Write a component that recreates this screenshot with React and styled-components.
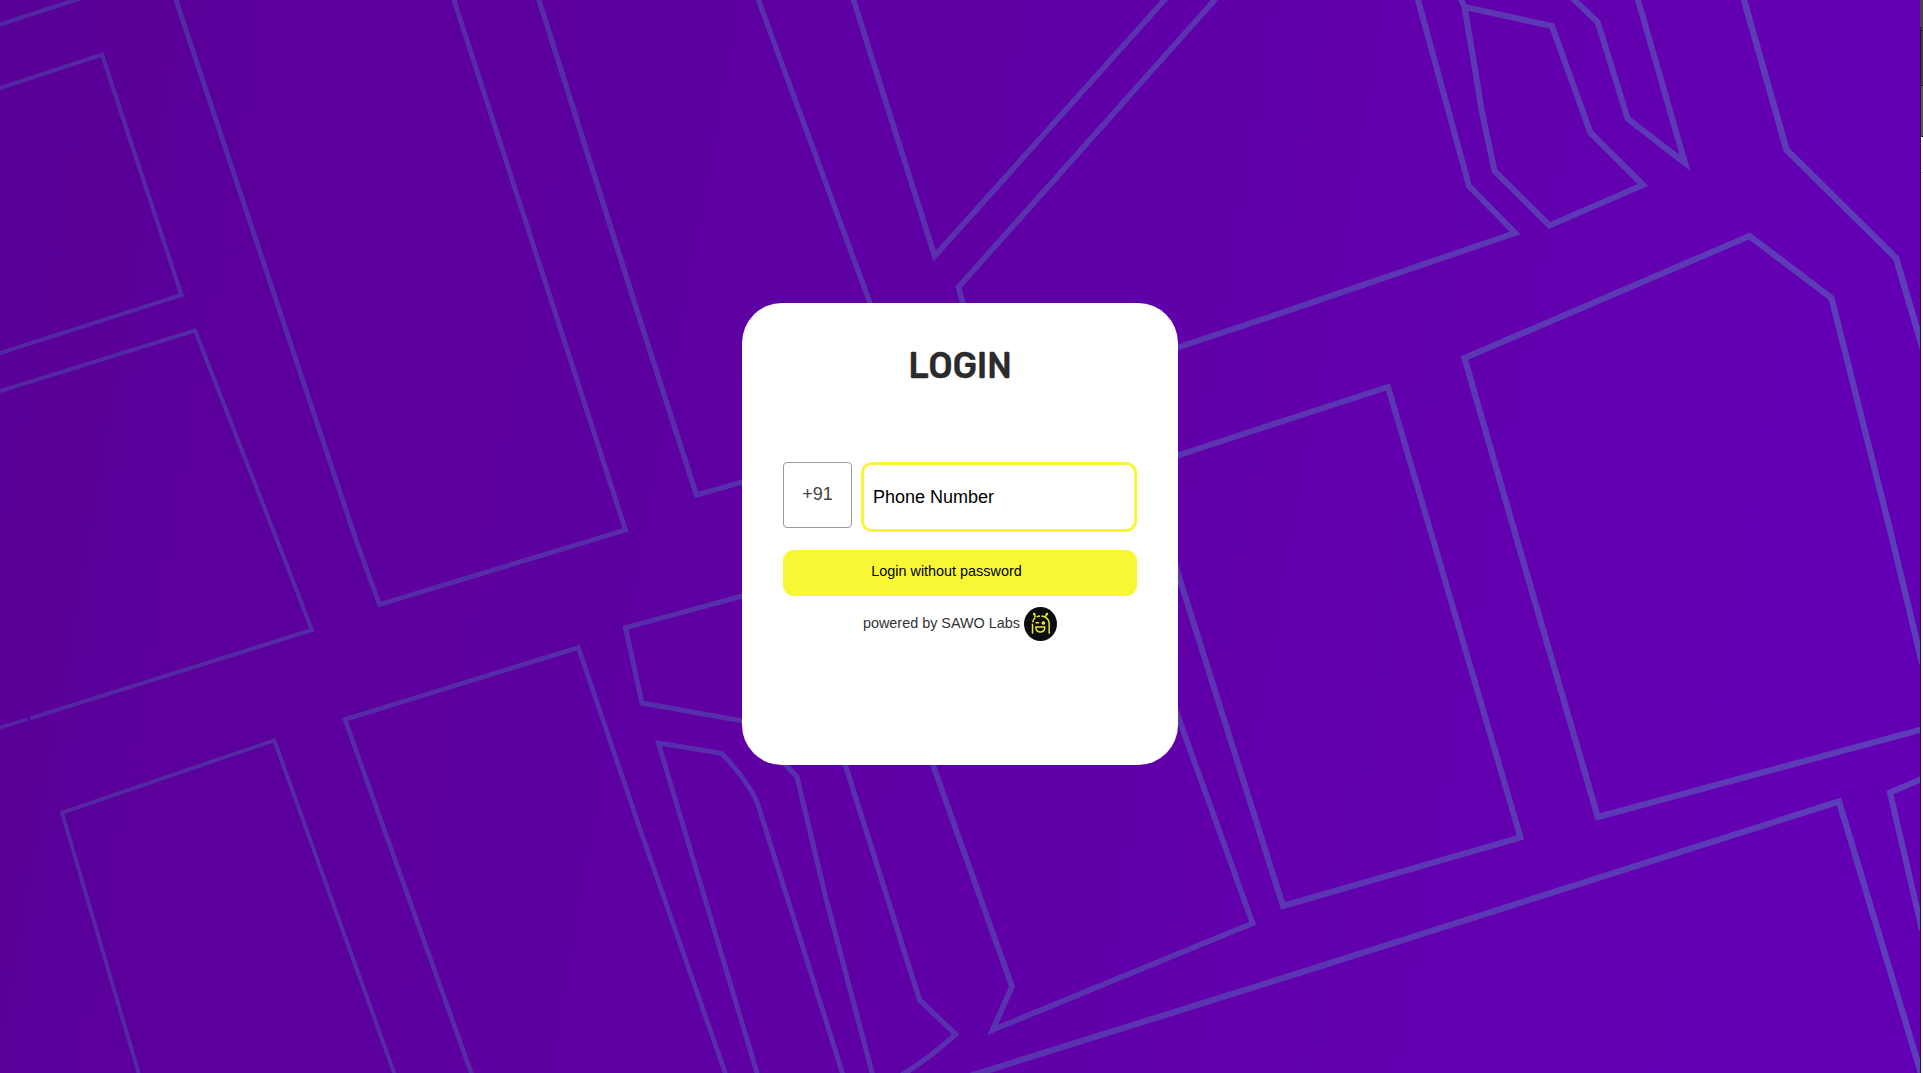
import React from "react";
import styled, { createGlobalStyle } from "styled-components";

const GlobalStyle = createGlobalStyle`
  * { box-sizing: border-box; }
  body { margin: 0; overflow: hidden; }
`;

const Page = styled.div`
  display: flex;
  width: 100vw;
  height: 100vh;
  font-family: "Liberation Sans", Arial, sans-serif;
`;

const Main = styled.main`
  position: relative;
  flex: 1;
  display: flex;
  justify-content: center;
  align-items: flex-start;
  padding-top: 303px;
  overflow: hidden;
  background: linear-gradient(100deg, #590097 0%, #5f00a5 48%, #6400b4 90%);
`;

const MapArt = styled.svg`
  position: absolute;
  inset: 0;
  width: 1920px;
  height: 1073px;
`;

const Card = styled.section`
  position: relative;
  display: flex;
  flex-direction: column;
  width: 436px;
  height: 462px;
  padding: 0 41px;
  border-radius: 40px;
  background: #fff;
`;

const Title = styled.h1`
  margin: 38px 0 0;
  height: 48px;
  line-height: 48px;
  text-align: center;
  font-family: Rubik, Roboto, sans-serif;
  font-size: 37.5px;
  font-weight: 500;
  letter-spacing: -0.3px;
  transform: scaleX(0.94);
  color: #2b2b2b;
  -webkit-text-stroke: 0.3px #2b2b2b;
`;

const PhoneRow = styled.div`
  display: flex;
  align-items: flex-start;
  gap: 9px;
  margin-top: 73px;
`;

const CountryCode = styled.div`
  width: 69px;
  height: 66px;
  border: 1px solid #9b9b9b;
  border-radius: 4px;
  line-height: 63px;
  text-align: center;
  font-size: 18px;
  color: #444;
`;

const PhoneField = styled.input`
  flex: 1;
  min-width: 0;
  height: 70px;
  padding: 0 0 0 9px;
  border: 3px solid #f8f736;
  border-radius: 11px;
  outline: none;
  background: #fff;
  font-family: inherit;
  font-size: 18px;
  color: #000;
  &::placeholder { color: #000; opacity: 1; }
`;

const LoginButton = styled.button`
  height: 46px;
  margin-top: 18px;
  padding: 0 27px 4px 0;
  border: 0;
  border-radius: 11px;
  background: #f8f736;
  font-family: inherit;
  font-size: 14.4px;
  text-align: center;
  color: #000;
`;

const PoweredBy = styled.footer`
  display: flex;
  justify-content: center;
  align-items: center;
  gap: 4px;
  margin-top: 11px;
  font-size: 14.4px;
  color: #333;
`;

const PoweredText = styled.span`
  padding-bottom: 2px;
  line-height: 18px;
`;

const Logo = styled.svg`
  display: block;
  width: 33px;
  height: 34px;
`;

const EdgeStrip = styled.aside`
  display: flex;
  flex-direction: column;
  width: 3px;
  background: #f6f6f6;
`;

const EdgeBlock = styled.div`
  height: ${(p) => p.$height}px;
  flex: ${(p) => (p.$fill ? 1 : "none")};
  background: ${(p) => p.$color};
  border-left: ${(p) => (p.$bare ? "none" : "1px solid #1e1e22")};
`;

const roads = [
  { w: 4.2, d: "M-5 26L0 24.5L78 -1L85 -4" },
  { w: 4, d: "M-5 90L0 88L102 54.5L181.5 295L0 353L-5 355" },
  { w: 4, d: "M-5 393L0 391L195 330.5L277 540L312 630L30 718.4" },
  { w: 3.2, d: "M27.5 719.2L-5 729" },
  { w: 4.8, d: "M175 -4L176 0L356 540L379.5 604.5L625.5 530L454 0L453 -4" },
  { w: 5.2, d: "M538 -4L539 0L640 320L696.5 495L742 482L932 420L870 303L758.4 0L757 -4" },
  { w: 5.6, d: "M852 -4L853.5 0L934.7 256L1164.5 0L1170 -6" },
  { w: 5.6, d: "M1220 -6L1214.7 0L958.6 287L963 304L967 320" },
  { w: 6, d: "M1417 -4L1418 0L1469 186L1515 233L1280 313.4L1170 350" },
  { w: 6, d: "M1458.5 -6L1464.5 7L1552 26L1590.4 132.6L1643 185L1549.4 225.5L1494.5 171L1481.5 110L1475 69L1464.5 7" },
  { w: 6, d: "M1571 -4L1574.4 0L1597.8 22.4L1627.7 118.8L1685 163L1638 0L1637 -4" },
  { w: 6.4, d: "M1743 -4L1744 0L1786.5 149.8L1896 258L1925 356" },
  { w: 6.2, d: "M1517 540L1464.5 358L1749.5 236L1831.5 298L1891.5 536L1922 663M1464.5 358L1517 540L1597.8 817L1925 728.5" },
  { w: 6, d: "M1170 458L1280 422L1388 387L1432 536L1520.5 837.5L1283 906L1180 580L1165 530" },
  { w: 5.6, d: "M1165 680L1179 719L1252.6 923.3L992.5 1030L1012 986.7L933 765L925 740" },
  { w: 6.2, d: "M970 1076L1280 979L1839 801.5L1923 1080" },
  { w: 6, d: "M1925 777.5L1890 792.5L1922 930" },
  { w: 3.8, d: "M140 1078L62 812.6L274.3 740.3L396 1078" },
  { w: 4.6, d: "M473 1078L345 719.6L578.4 647.5L640 829L727 1078" },
  { w: 5, d: "M750 594L625.5 627.7L642 703L742 720.7L797 776.7L825.5 896.7L873.5 1078" },
  { w: 4.8, d: "M758.5 1078L658.4 743L721.4 753.3Q745 777 757 801.7L844 1078" },
  { w: 5.2, d: "M838 740L845.4 765L919.6 1000L955.6 1034.3Q930 1058 900 1076" },
];

function MapBackdrop() {
  return (
    <MapArt viewBox="0 0 1920 1073" aria-hidden="true">
      <defs>
        <linearGradient id="road" gradientUnits="userSpaceOnUse" x1="0" y1="0" x2="1920" y2="0">
          <stop offset="0" stopColor="#5227a2" />
          <stop offset="0.5" stopColor="#5931ae" />
          <stop offset="1" stopColor="#5d3db9" />
        </linearGradient>
      </defs>
      <g fill="none" stroke="url(#road)" strokeLinejoin="miter">
        {roads.map((r) => (
          <path key={r.d} d={r.d} strokeWidth={r.w} />
        ))}
      </g>
    </MapArt>
  );
}

function SawoLogo() {
  return (
    <Logo viewBox="0 0 99 102" aria-label="SAWO">
      <ellipse cx="49.5" cy="51" rx="49.5" ry="51" fill="#0d0d0d" />
      <g fill="none" stroke="#eded2c" strokeWidth="4.4">
        <path d="M25.5 80V50M26 46Q27 37 34 32M38 29.5Q43 27 48 27M52 27Q60 28 66 32Q75 38 75.5 50V80" />
        <path d="M34 31L31 21M63 31L68 21" />
        <path d="M36 60H62V65Q60 75 49 75Q38 75 36 65Z" />
        <path d="M35 49Q40 44 45 49" />
      </g>
      <circle cx="30.5" cy="21" r="3.6" fill="#eded2c" />
      <circle cx="69" cy="21" r="3.6" fill="#eded2c" />
      <circle cx="58" cy="48" r="5.5" fill="#f3f336" />
    </Logo>
  );
}

export default function App() {
  return (
    <Page>
      <GlobalStyle />
      <Main>
        <MapBackdrop />
        <Card>
          <Title>LOGIN</Title>
          <PhoneRow>
            <CountryCode>+91</CountryCode>
            <PhoneField type="tel" placeholder="Phone Number" />
          </PhoneRow>
          <LoginButton type="button">Login without password</LoginButton>
          <PoweredBy>
            <PoweredText>powered by SAWO Labs</PoweredText>
            <SawoLogo />
          </PoweredBy>
        </Card>
      </Main>
      <EdgeStrip>
        <EdgeBlock $height={27} $color="#444645" $bare />
        <EdgeBlock $height={3} $color="#444645" />
        <EdgeBlock $height={1} $color="#1e1e22" />
        <EdgeBlock $height={54} $color="#3d403e" />
        <EdgeBlock $height={1} $color="#1e1e22" />
        <EdgeBlock $height={50} $color="#5a5c5b" />
        <EdgeBlock $height={1} $color="#1e1e22" />
        <EdgeBlock $height={35} $color="#fafafa" />
        <EdgeBlock $height={1} $color="#d8d8d8" />
        <EdgeBlock $fill $color="#f6f7f7" />
      </EdgeStrip>
    </Page>
  );
}
